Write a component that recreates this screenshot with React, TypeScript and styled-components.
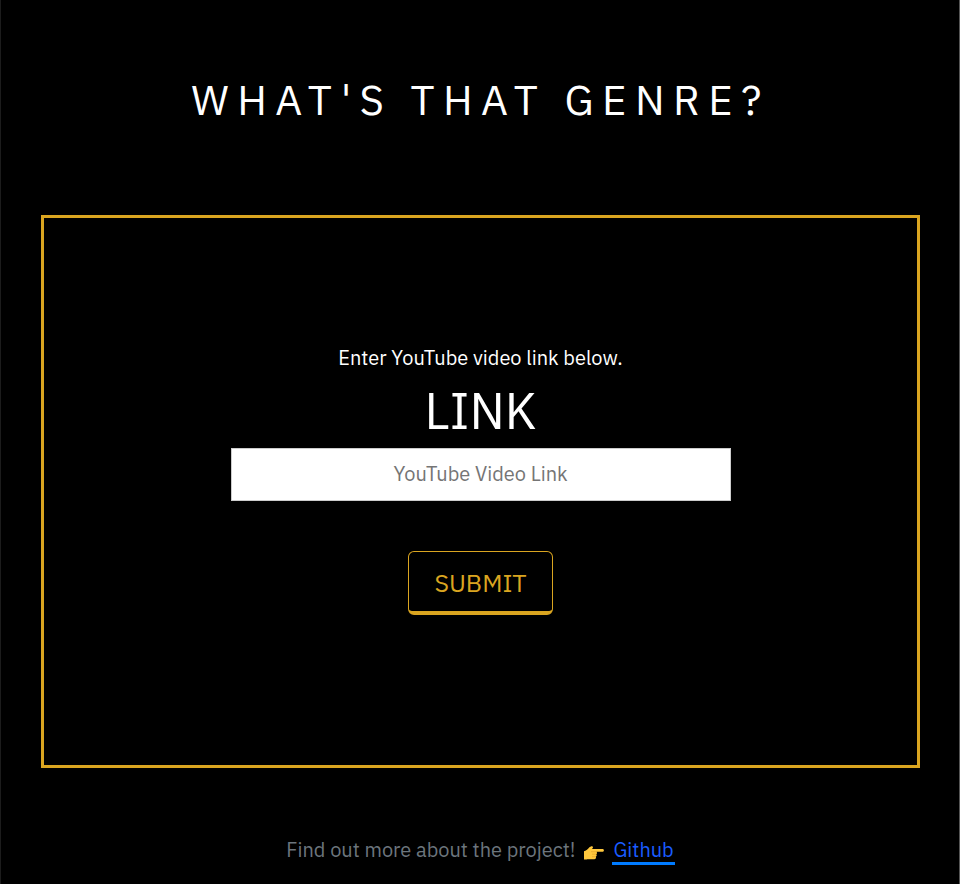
import React, { useState } from "react";
import styled, { createGlobalStyle } from "styled-components";

const gold = "#daa520";

const GlobalStyle = createGlobalStyle`
  *, *::before, *::after { box-sizing: border-box; }
  body {
    margin: 0;
    background: #000;
    color: #fff;
    font-family: "IBM Plex Sans", "Noto Sans", sans-serif;
    font-size: 20px;
    line-height: 30px;
  }
`;

const Page = styled.div`
  min-height: 100vh;
  padding: 70px 39px 0 40px;
  border-right: 1px solid #555;
  border-left: 1px solid #1c1c1c;
  display: flex;
  flex-direction: column;
`;

const Title = styled.h1`
  margin: 0 0 85px;
  font-size: 42px;
  line-height: 60px;
  font-weight: 400;
  letter-spacing: 0.2em;
  text-align: center;
  text-transform: uppercase;
`;

const Panel = styled.form`
  border: 3px solid ${gold};
  padding: 125px 24px 150px;
  display: flex;
  flex-direction: column;
  align-items: center;
`;

const Prompt = styled.p`
  margin: 0;
`;

const LinkLabel = styled.label`
  margin: 8px 0;
  font-size: 50px;
  line-height: 59px;
`;

const LinkInput = styled.input`
  width: 100%;
  max-width: 500px;
  height: 53px;
  padding: 0 12px 2px;
  border: 1px solid #ccc;
  border-radius: 0;
  background: #fff;
  color: #333;
  font: inherit;
  text-align: center;

  &::placeholder {
    color: #757575;
    opacity: 1;
  }
`;

const SubmitButton = styled.button`
  height: 64px;
  margin-top: 50px;
  padding: 2px 25px 0;
  border: 1px solid ${gold};
  border-bottom-width: 4px;
  border-radius: 6px;
  background: transparent;
  color: ${gold};
  font: inherit;
  font-size: 25px;
  text-transform: uppercase;
  cursor: pointer;
`;

const Footer = styled.footer`
  margin-top: 67px;
  display: flex;
  justify-content: center;
  align-items: flex-start;
  color: #6c757d;
`;

const Hand = styled.svg`
  width: 20px;
  height: 14px;
  margin: 11px 8px 0 9px;
`;

const FooterLink = styled.a`
  padding: 3px 1px 0;
  border-bottom: 3px solid #007bff;
  color: #1a5cff;
  line-height: 24px;
  text-decoration: none;
`;

function PointingHand() {
  return (
    <Hand viewBox="0 0 20 14" role="img" aria-label="pointing right">
      <path
        fill="#ffc83d"
        d="M0 5.2 C2 4.8 3.4 3.4 5 1.8 C6.4 .4 7.6 0 8.5 .4 C9.4 .9 9 2 7.8 3.1 H18.5 C20.3 3.1 20.4 5.6 18.5 5.7 H12.3 C13.4 6.3 13.2 7.8 12.2 8.2 C13.1 8.9 12.8 10.3 11.8 10.7 C12.4 11.6 11.8 13.2 10.3 13.2 H4.3 C3 13.2 2.2 13.6 0 13.6 Z"
      />
      <path
        fill="none"
        stroke="#e19d23"
        strokeWidth="0.6"
        d="M7 5.7 H12.3 M8 8.2 H12.2 M8 10.7 H11.8"
      />
    </Hand>
  );
}

export default function App() {
  const [link, setLink] = useState("");

  return (
    <>
      <GlobalStyle />
      <Page>
        <Title>What's that genre?</Title>
        <Panel onSubmit={(event) => event.preventDefault()}>
          <Prompt>Enter YouTube video link below.</Prompt>
          <LinkLabel htmlFor="video-link">LINK</LinkLabel>
          <LinkInput
            id="video-link"
            type="text"
            placeholder="YouTube Video Link"
            value={link}
            onChange={(event) => setLink(event.target.value)}
          />
          <SubmitButton type="submit">Submit</SubmitButton>
        </Panel>
        <Footer>
          <span>Find out more about the project!</span>
          <PointingHand />
          <FooterLink href="#github">Github</FooterLink>
        </Footer>
      </Page>
    </>
  );
}
